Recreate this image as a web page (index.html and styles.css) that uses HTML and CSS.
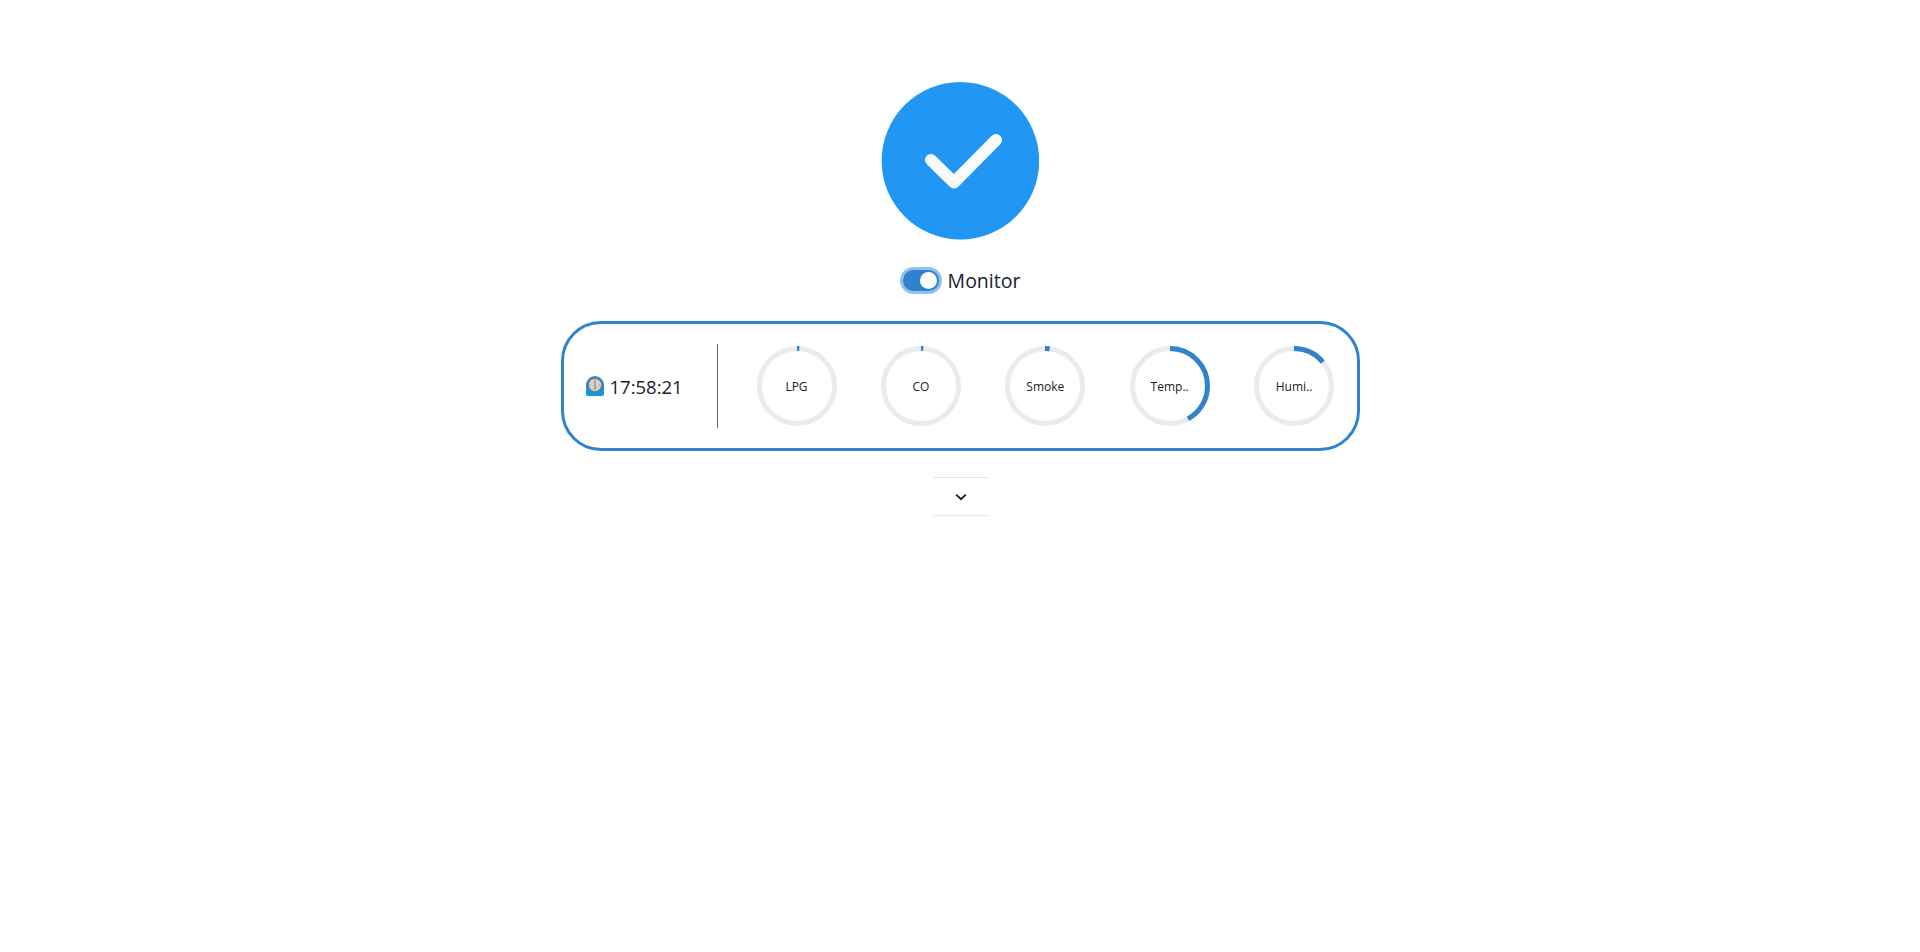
FILE: index.html
```html
<!DOCTYPE html>
<html lang="en">
<head>
    <meta charset="UTF-8">
    <title>Monitor</title>
    <link rel="stylesheet" href="styles.css">
</head>
<body>
    <div class="page">
        <svg class="status-icon" width="158" height="158" viewBox="0 0 158 158">
            <circle cx="79.4" cy="78.8" r="78.8" fill="#2196f3"/>
            <path d="M50 78 L73 100.5 L115 58" fill="none" stroke="#fafafa" stroke-width="12" stroke-linecap="round" stroke-linejoin="round"/>
        </svg>

        <label class="monitor">
            <span class="switch"><span class="thumb"></span></span>
            <span>Monitor</span>
        </label>

        <div class="card">
            <div class="clock">
                <svg width="18" height="20" viewBox="0 0 18 20">
                    <path d="M0 18 V9 A9 9 0 0 1 18 9 V18 Q18 20 16 20 H2 Q0 20 0 18 Z" fill="#0b9be3"/>
                    <circle cx="9" cy="9" r="7.8" fill="#6f7478"/>
                    <circle cx="9" cy="9" r="6.2" fill="#d2d2cf"/>
                    <path d="M9 3.5 V9" stroke="#d8604f" stroke-width="1"/>
                    <path d="M9 9 V14" stroke="#77797b" stroke-width="1"/>
                    <path d="M3.8 9 H5 M13 9 H14.2" stroke="#8c8e90" stroke-width="1"/>
                </svg>
                <span>17:58:21</span>
            </div>
            <div class="divider"></div>
            <div class="rings">
                <div class="ring">
                    <svg width="80" height="80" viewBox="0 0 80 80">
                        <circle class="track" cx="40" cy="40" r="37.5"/>
                        <circle class="value" cx="40" cy="40" r="37.5" pathLength="100" stroke-dasharray="1 100"/>
                    </svg>
                    <span class="ring-label">LPG</span>
                </div>
                <div class="ring">
                    <svg width="80" height="80" viewBox="0 0 80 80">
                        <circle class="track" cx="40" cy="40" r="37.5"/>
                        <circle class="value" cx="40" cy="40" r="37.5" pathLength="100" stroke-dasharray="1 100"/>
                    </svg>
                    <span class="ring-label">CO</span>
                </div>
                <div class="ring">
                    <svg width="80" height="80" viewBox="0 0 80 80">
                        <circle class="track" cx="40" cy="40" r="37.5"/>
                        <circle class="value" cx="40" cy="40" r="37.5" pathLength="100" stroke-dasharray="2 100"/>
                    </svg>
                    <span class="ring-label">Smoke</span>
                </div>
                <div class="ring">
                    <svg width="80" height="80" viewBox="0 0 80 80">
                        <circle class="track" cx="40" cy="40" r="37.5"/>
                        <circle class="value" cx="40" cy="40" r="37.5" pathLength="100" stroke-dasharray="42 100"/>
                    </svg>
                    <span class="ring-label">Temp..</span>
                </div>
                <div class="ring">
                    <svg width="80" height="80" viewBox="0 0 80 80">
                        <circle class="track" cx="40" cy="40" r="37.5"/>
                        <circle class="value" cx="40" cy="40" r="37.5" pathLength="100" stroke-dasharray="14 100"/>
                    </svg>
                    <span class="ring-label">Humi..</span>
                </div>
            </div>
        </div>

        <button class="expand">
            <svg width="16" height="16" viewBox="-1 0 16 16">
                <path d="M3.2 5.6 L8 10.2 L12.8 5.6" fill="none" stroke="#1a202c" stroke-width="2"/>
            </svg>
        </button>
    </div>
</body>
</html>
```

FILE: styles.css
```css
body {
    margin: 0;
    font-family: 'Open Sans', 'Noto Sans', sans-serif;
    color: #1a202c;
    background: white;
}
.page {
    display: flex;
    flex-direction: column;
    align-items: center;
    padding-top: 82px;
    min-height: 870px;
}
.status-icon {
    display: block;
}
.monitor {
    display: flex;
    align-items: center;
    gap: 6px;
    margin-top: 27px;
    font-size: 19.5px;
    line-height: 27px;
}
.switch {
    display: flex;
    align-items: center;
    justify-content: flex-end;
    box-sizing: border-box;
    width: 36px;
    height: 21px;
    margin: 3px;
    padding: 2px;
    border-radius: 11px;
    background: #3182ce;
    box-shadow: 0 0 0 3px rgba(66, 153, 225, 0.6);
}
.thumb {
    width: 17px;
    height: 17px;
    border-radius: 50%;
    background: white;
}
.card {
    display: flex;
    align-items: center;
    box-sizing: border-box;
    width: 799px;
    height: 130px;
    margin-top: 27px;
    padding: 0 22px;
    border: 3px solid #3182ce;
    border-radius: 40px;
}
.clock {
    display: flex;
    align-items: center;
    gap: 6px;
    width: 131px;
    font-size: 18.5px;
}
.divider {
    width: 1px;
    height: 84px;
    background: #666;
}
.rings {
    display: flex;
    gap: 44.4px;
    margin-left: 39px;
}
.ring {
    display: grid;
    place-items: center;
    width: 80px;
    height: 80px;
}
.ring svg, .ring-label {
    grid-area: 1 / 1;
}
.ring svg {
    display: block;
    transform: rotate(-90deg);
}
.track, .value {
    fill: none;
    stroke-width: 5;
}
.track {
    stroke: #edebe9;
}
.value {
    stroke: #3182ce;
}
.ring-label {
    font-size: 12px;
}
.expand {
    display: flex;
    align-items: center;
    justify-content: center;
    width: 55px;
    height: 39px;
    margin-top: 26px;
    padding: 0;
    border: none;
    border-top: 1px solid #e2e8f0;
    border-bottom: 1px solid #e2e8f0;
    background: white;
}
```
